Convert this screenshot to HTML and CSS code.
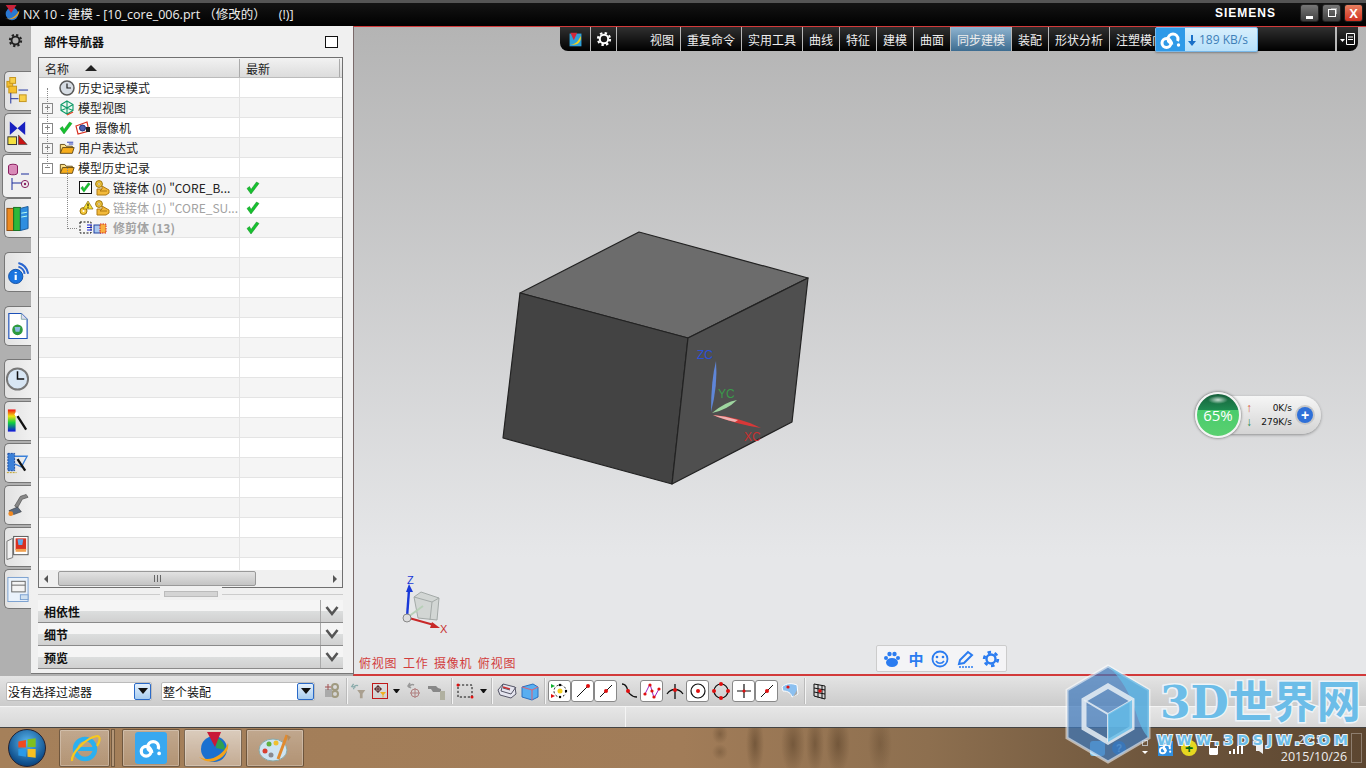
FILE: index.html
```html
<!DOCTYPE html>
<html lang="zh-CN">
<head>
<meta charset="utf-8">
<title>NX 10 - 建模</title>
<link rel="stylesheet" href="styles.css">
</head>
<body>
<svg class="defs" width="0" height="0">
  <symbol id="check" viewBox="0 0 14 14"><path d="M1 7.500 5 13 13 2.500 10.500 1 5 8.500 3.500 5.500Z" fill="#16c22e" stroke="#0d8a20" stroke-width=".5"/></symbol>
  <symbol id="bodyico" viewBox="0 0 16 16"><circle cx="5" cy="4" r="3.400" fill="#f5c83a" stroke="#9a7410"/><circle cx="5" cy="4" r="1.200" fill="#fff" stroke="#9a7410" stroke-width=".6"/><path d="M3 9h5V6l7 4v3l-3 2H3Z" fill="#f2b93a" stroke="#b07a12"/><path d="M8 9l-2 2h7" fill="none" stroke="#b07a12"/></symbol>
  <symbol id="folder" viewBox="0 0 18 16"><path d="M1.500 14V4h5l1.500 2h7v2" fill="#fbe08a" stroke="#5d4410"/><path d="M1.500 14 4 7.500h13L15 14Z" fill="#f7ad1c" stroke="#5d4410"/></symbol>
  <symbol id="gear" viewBox="0 0 16 16"><circle cx="8" cy="8" r="4.200" fill="none" stroke="currentColor" stroke-width="2"/><circle cx="8" cy="8" r="6" fill="none" stroke="currentColor" stroke-width="2.200" stroke-dasharray="2.400 2.300"/></symbol>
  <symbol id="chev" viewBox="0 0 14 12"><path d="M1.500 2 7 9 12.500 2" fill="none" stroke="#555" stroke-width="2.600"/></symbol>
  <symbol id="baidu" viewBox="0 0 24 24"><circle cx="7.500" cy="15" r="4.500" fill="none" stroke="#fff" stroke-width="3"/><path d="M9 11a5 5 0 0 1 10 0c0 1-.3 1.500-.6 2M9 11c0 3 2.500 4.500 5 4" fill="none" stroke="#fff" stroke-width="3"/><circle cx="19.500" cy="17" r="1.700" fill="#fff"/></symbol>
</svg>

<div class="app">
  <header class="titlebar">
    <svg class="app-logo" viewBox="0 0 20 20" width="18" height="18"><circle cx="10" cy="11" r="7" fill="#2a78d0"/><path d="M3 1h12l-6 9Z" fill="#c8233a"/><path d="M2 16C8 18 15 14 18 7c1 7-8 12-16 9Z" fill="#f2a21c"/></svg>
    <span class="title-text">NX 10 - 建模 - [10_core_006.prt （修改的）&nbsp;&nbsp;&nbsp;&nbsp;(!)]</span>
    <span class="siemens">SIEMENS</span>
    <div class="winbtns">
      <span class="winbtn"><i class="w-min"></i></span>
      <span class="winbtn"><i class="w-res"></i></span>
      <span class="winbtn w-close">X</span>
    </div>
  </header>

  <main class="main">
    <nav class="rail">
      <svg class="rail-gear"><use href="#gear"/></svg>
      <div class="tab t-a1">
        <svg viewBox="0 0 26 30" width="26" height="30"><rect x="2" y="5" width="6" height="6" fill="#f6c02f" stroke="#c4941c"/><rect x="5" y="1" width="6" height="6" fill="#f8d04a" stroke="#c4941c"/><rect x="4" y="10" width="8" height="7" fill="#f6c02f" stroke="#c4941c"/><path d="M6 17v11M6 23h8M14 14h10" stroke="#1c2f9c" fill="none"/><rect x="15" y="19" width="7" height="7" fill="#f8d04a" stroke="#c4941c"/></svg>
      </div>
      <div class="tab t-a2">
        <svg viewBox="0 0 26 30" width="26" height="30"><path d="M5 3 13 10 5 17ZM21 3 13 10 21 17Z" fill="#1820c0"/><rect x="3" y="19" width="9" height="8" fill="#f4e040" stroke="#333"/><path d="M14 27V17l9 10Z" fill="#c81414" stroke="#333" stroke-width=".6"/></svg>
      </div>
      <div class="tab t-active">
        <svg viewBox="0 0 26 30" width="26" height="30"><ellipse cx="9" cy="5" rx="4.500" ry="1.800" fill="#e090c0" stroke="#8a2060"/><path d="M4.500 5v7c0 2.400 9 2.400 9 0V5" fill="#d88ab8" stroke="#8a2060"/><path d="M8 17v12M8 22h10M17 13h8" stroke="#1c2f9c" fill="none"/><circle cx="21" cy="23" r="3.600" fill="none" stroke="#8a2060"/><circle cx="21" cy="23" r="1.200" fill="#8a2060"/></svg>
      </div>
      <div class="tab t-a4">
        <svg viewBox="0 0 26 30" width="26" height="30"><rect x="2" y="5" width="7" height="23" fill="#ee8a20" stroke="#8a4a10"/><rect x="9" y="4" width="7" height="24" fill="#2fb83a" stroke="#167020"/><path d="M16 5l8-2v23l-8 2Z" fill="#2e8ee0" stroke="#1a5a9a"/><path d="M17 10l6-1M17 14l6-1" stroke="#bfe" fill="none"/></svg>
      </div>
      <div class="tab t-b1">
        <svg viewBox="0 0 28 30" width="28" height="30"><path d="M15 5a15 15 0 0 1 11 12M15 9a10 10 0 0 1 7 8" fill="none" stroke="#2a66d0" stroke-width="2.200"/><circle cx="12" cy="20" r="8" fill="#1a74e0" stroke="#0c4aa0"/><path d="M12 15v1.500M12 18v6" stroke="#fff" stroke-width="2.400"/></svg>
      </div>
      <div class="tab t-c1">
        <svg viewBox="0 0 26 32" width="26" height="32"><path d="M4 3h13l6 6v20H4Z" fill="#fff" stroke="#1c50b8" stroke-width="1.200"/><path d="M17 3v6h6" fill="#dde" stroke="#8aa"/><circle cx="13" cy="20" r="5.500" fill="#2e9a3e"/><path d="M10 17h6l-1 5h-4Z" fill="#88b8e0"/></svg>
      </div>
      <div class="tab t-d2">
        <svg viewBox="0 0 26 30" width="26" height="30"><circle cx="13" cy="15" r="11" fill="#d8e6f4" stroke="#777" stroke-width="2"/><path d="M13 7v8h7" fill="none" stroke="#111" stroke-width="1.600"/></svg>
      </div>
      <div class="tab t-d2">
        <svg viewBox="0 0 26 30" width="26" height="30"><defs><linearGradient id="rb" x1="0" y1="0" x2="0" y2="1"><stop offset="0" stop-color="#f01010"/><stop offset=".3" stop-color="#f0e010"/><stop offset=".6" stop-color="#10d040"/><stop offset="1" stop-color="#1010e0"/></linearGradient></defs><rect x="3" y="3" width="8" height="23" fill="url(#rb)"/><path d="M13 10l9 14" stroke="#111" stroke-width="2.400"/><circle cx="12" cy="8" r="2" fill="#fff"/></svg>
      </div>
      <div class="tab t-d2">
        <svg viewBox="0 0 26 30" width="26" height="30"><rect x="3" y="5" width="7" height="18" fill="#3a80d8" stroke="#1a4aa0" stroke-dasharray="2 1"/><path d="M10 8h13l-6 11-7-3" fill="none" stroke="#3a80d8" stroke-width="1.400"/><path d="M13 11l8 12" stroke="#111" stroke-width="2.400"/><path d="M2 25h10" stroke="#c0a020" stroke-dasharray="2 1"/></svg>
      </div>
      <div class="tab t-d2">
        <svg viewBox="0 0 26 30" width="26" height="30"><path d="M16 6l6-2 2 3-6 2-5 9-3-2Z" fill="#888" stroke="#444" stroke-width=".6"/><path d="M4 21l9-4 4 5-8 3Z" fill="#5a6a80" stroke="#333" stroke-width=".6"/><circle cx="6" cy="24" r="2.500" fill="#f08820"/></svg>
      </div>
      <div class="tab t-d2">
        <svg viewBox="0 0 26 30" width="26" height="30"><path d="M2 9l6-3v20l-6 2Z" fill="#f0f0f0" stroke="#777"/><rect x="9" y="4" width="15" height="19" fill="#fff" stroke="#555"/><rect x="11" y="6" width="11" height="12" fill="#d83020"/><path d="M13 7h6l-1 6h-4Z" fill="#60a8e8"/><rect x="11" y="17" width="11" height="3" fill="#f0a050"/></svg>
      </div>
      <div class="tab t-d2">
        <svg viewBox="0 0 26 30" width="26" height="30"><rect x="3" y="3" width="21" height="25" fill="#eaf2fb" stroke="#7aa0d0"/><rect x="7" y="7" width="14" height="11" fill="#f4f4f4" stroke="#666"/><path d="M7 11h14" stroke="#666"/><rect x="16" y="21" width="8" height="5" fill="#cfe0f0" stroke="#7aa0d0"/></svg>
      </div>
    </nav>

    <section class="nav-panel">
      <div class="nav-head"><strong class="nav-title">部件导航器</strong><span class="maximize"></span></div>
      <div class="tree-box">
        <div class="tree-header">
          <div class="col-name">名称<i class="sort-up"></i></div>
          <div class="col-new">最新</div>
        </div>
        <div class="tree-body">
          <div class="tree-lines l-a"></div><div class="tree-lines l-b"></div>
          <div class="row">
            <div class="col-name"><span class="tg"></span><svg class="i16" viewBox="0 0 16 16"><circle cx="8" cy="8" r="7" fill="#d7dde4" stroke="#5a5a5a" stroke-width="1.500"/><path d="M8 3.500V8h4" fill="none" stroke="#222" stroke-width="1.200"/></svg><span class="lbl">历史记录模式</span></div><div class="col-new"></div>
          </div>
          <div class="row alt">
            <div class="col-name"><span class="tg plus"></span><svg class="i16" viewBox="0 0 16 16"><path d="M8 1l6 3.500v6L8 14l-6-3.500v-6Z M2 4.500 8 8l6-3.500M8 8v6M2 10.500 8 8l6 2.500M8 1v7" fill="#eafaf0" stroke="#0f9a68" stroke-width="1.100"/><path d="M8 15l6-3" stroke="#e04020" stroke-width="1.300"/></svg><span class="lbl">模型视图</span></div><div class="col-new"></div>
          </div>
          <div class="row">
            <div class="col-name"><span class="tg plus"></span><svg class="i14"><use href="#check"/></svg><svg class="i16 cam" viewBox="0 0 16 16"><path d="M1 6l11-4 2 9-11 3Z" fill="#fff" stroke="#d83020" stroke-width="1.200"/><circle cx="7.500" cy="8" r="3" fill="#5060b0" stroke="#223080"/><rect x="11" y="7" width="4" height="5" fill="#222"/></svg><span class="lbl">摄像机</span></div><div class="col-new"></div>
          </div>
          <div class="row alt">
            <div class="col-name"><span class="tg plus"></span><svg class="i16" viewBox="0 0 18 16"><use href="#folder"/><path d="M9 1.500h7M11 3.500h5" stroke="#1c2fb0"/></svg><span class="lbl">用户表达式</span></div><div class="col-new"></div>
          </div>
          <div class="row">
            <div class="col-name"><span class="tg minus"></span><svg class="i16"><use href="#folder"/></svg><span class="lbl">模型历史记录</span></div><div class="col-new"></div>
          </div>
          <div class="row alt">
            <div class="col-name lv2"><span class="cb"><svg class="i11"><use href="#check"/></svg></span><svg class="i16"><use href="#bodyico"/></svg><span class="lbl">链接体 (0) "CORE_B...</span></div><div class="col-new"><svg class="i14"><use href="#check"/></svg></div>
          </div>
          <div class="row grey">
            <div class="col-name lv2"><svg class="i16 warn" viewBox="0 0 16 16"><circle cx="4.500" cy="11" r="3.500" fill="#f5c83a" stroke="#9a7410"/><circle cx="4.500" cy="11" r="1" fill="#fff"/><path d="M9 1l5 8H4Z" fill="#f8e030" stroke="#8a6a10" stroke-width=".7"/><path d="M9 3.500v3M9 7.200v1" stroke="#000"/></svg><svg class="i16"><use href="#bodyico"/></svg><span class="lbl">链接体 (1) "CORE_SU...</span></div><div class="col-new"><svg class="i14"><use href="#check"/></svg></div>
          </div>
          <div class="row alt grey">
            <div class="col-name lv2"><svg class="trim" viewBox="0 0 28 14" width="28" height="14"><rect x="1" y="1" width="11" height="11" fill="none" stroke="#111" stroke-dasharray="2 1.500"/><path d="M8 4h5M8 6.500h5M8 9h5" stroke="#1820d0"/><rect x="15" y="4" width="7" height="8" fill="#a8c8f0" stroke="#2040a0"/><rect x="21" y="3" width="6" height="9" fill="#f8b040" stroke="#d02020" stroke-dasharray="1.500 1"/></svg><span class="lbl lbl-b">修剪体 (13)</span></div><div class="col-new"><svg class="i14"><use href="#check"/></svg></div>
          </div>
          <div class="row"></div><div class="row alt"></div><div class="row"></div><div class="row alt"></div><div class="row"></div><div class="row alt"></div><div class="row"></div><div class="row alt"></div><div class="row"></div><div class="row alt"></div><div class="row"></div><div class="row alt"></div><div class="row"></div><div class="row alt"></div><div class="row"></div><div class="row alt"></div><div class="row"></div>
        </div>
        <div class="hscroll">
          <i class="arr-l"></i>
          <div class="thumb"><b></b></div>
          <i class="arr-r"></i>
        </div>
      </div>
      <div class="splitter"><span></span></div>
      <div class="acc"><strong>相依性</strong><span class="acc-btn"><svg><use href="#chev"/></svg></span></div>
      <div class="acc"><strong>细节</strong><span class="acc-btn"><svg><use href="#chev"/></svg></span></div>
      <div class="acc"><strong>预览</strong><span class="acc-btn"><svg><use href="#chev"/></svg></span></div>
    </section>

    <section class="viewport">
      <svg class="scene" viewBox="353 26 1013 650" width="1013" height="650">
        <g stroke="#222" stroke-width="1.200" stroke-linejoin="round">
          <path d="M520 293 639 232 808 278 688 338Z" fill="#6c6c6c"/>
          <path d="M520 293 688 338 672 484 503 438Z" fill="#434343"/>
          <path d="M688 338 808 278 792 422 672 484Z" fill="#4f4f4f"/>
        </g>
        <path d="M711 412Q711 380 716 361Q718 385 711 412Z" fill="#5f86d8"/>
        <path d="M712 413Q725 402 737 400Q727 410 712 413Z" fill="#9fd6a0"/>
        <path d="M713 415Q740 417 761 428Q735 424 713 415Z" fill="#d83838"/>
        <path d="M713 415Q725 416 738 420L735 422Q722 419 713 415Z" fill="#f0b0b0"/>
        <text x="697" y="359" class="axis" fill="#2a50d8">ZC</text>
        <text x="718" y="398" class="axis" fill="#3a9a4a">YC</text>
        <text x="744" y="441" class="axis" fill="#c83030">XC</text>
        <g fill="#c9cecb" fill-opacity=".7" stroke="#a4aaa8">
          <path d="M414 597 421 592 439 598 437 620 418 618Z"/>
          <path d="M414 597 432 602 439 598M432 602 430 620" fill="none"/>
        </g>
        <path d="M408 617 423 606" stroke="#b8d0b8" stroke-width="2"/>
        <path d="M407 617 409 590" stroke="#1838d8" stroke-width="2.400"/>
        <path d="M406 592 409 584 413 592Z" fill="#1838d8"/>
        <path d="M409 618 434 625" stroke="#c82828" stroke-width="2.200"/>
        <path d="M432 622 440 628 430 628Z" fill="#c82828"/>
        <circle cx="407" cy="618" r="4" fill="#ddd" stroke="#888"/>
        <text x="407" y="584" class="mini" fill="#1838d8">Z</text>
        <text x="440" y="633" class="mini" fill="#c83030">X</text>
      </svg>
      <div class="view-label">俯视图 工作 摄像机 俯视图</div>

      <div class="ribbon">
        <span class="rb-cell rb-logo"><svg viewBox="0 0 20 20" width="17" height="17"><rect x="3" y="3" width="14" height="15" fill="#2fa0d8"/><path d="M4 2h8l-4 9Z" fill="#d0283a"/><path d="M3 15c6 2 10-2 13-9 2 7-5 13-13 9Z" fill="#f3d21c"/></svg></span>
        <span class="rb-cell rb-gear"><svg width="16" height="16"><use href="#gear"/></svg></span>
        <span class="rb-cell rb-first">视图</span>
        <span class="rb-cell rb-4">重复命令</span>
        <span class="rb-cell rb-4">实用工具</span>
        <span class="rb-cell rb-2">曲线</span>
        <span class="rb-cell rb-2">特征</span>
        <span class="rb-cell rb-2">建模</span>
        <span class="rb-cell rb-2">曲面</span>
        <span class="rb-cell rb-4 rb-on">同步建模</span>
        <span class="rb-cell rb-2">装配</span>
        <span class="rb-cell rb-4">形状分析</span>
        <span class="rb-cell rb-fill">注塑模向导</span>
        <span class="rb-cell rb-menu"><svg width="16" height="14" viewBox="0 0 16 14"><path d="M0 7h5L2.500 10Z" fill="#fff"/><path d="M6.500 1.500h8v11h-8ZM8 5h5M8 7.500h5" fill="none" stroke="#fff"/></svg></span>
      </div>
      <div class="speed">
        <span class="speed-ico"><svg width="24" height="24"><use href="#baidu"/></svg></span>
        <span class="speed-txt"><svg width="8" height="12" viewBox="0 0 8 12"><path d="M3 1h2v6h3l-4 5-4-5h3Z" fill="#1a70c8"/></svg>189 KB/s</span>
      </div>

      <div class="net">
        <div class="net-ball"><span>65%</span></div>
        <div class="net-rates">
          <div class="rate"><i class="up">↑</i><span>0K/s</span></div>
          <div class="rate"><i class="down">↓</i><span>279K/s</span></div>
        </div>
        <span class="net-plus">+</span>
      </div>

      <div class="ime">
        <svg width="18" height="18" viewBox="0 0 18 18"><ellipse cx="9" cy="12.500" rx="6" ry="4.500" fill="#2b7cf0"/><circle cx="3" cy="8" r="2" fill="#2b7cf0"/><circle cx="15" cy="8" r="2" fill="#2b7cf0"/><circle cx="6.500" cy="4" r="2.200" fill="#2b7cf0"/><circle cx="11.500" cy="4" r="2.200" fill="#2b7cf0"/></svg>
        <span class="ime-zh">中</span>
        <svg width="18" height="18" viewBox="0 0 18 18"><circle cx="9" cy="9" r="7.500" fill="none" stroke="#2b7cf0" stroke-width="1.800"/><circle cx="6" cy="7" r="1.300" fill="#2b7cf0"/><circle cx="12" cy="7" r="1.300" fill="#2b7cf0"/><path d="M5 11c2 3 6 3 8 0" fill="none" stroke="#2b7cf0" stroke-width="1.600"/></svg>
        <svg width="18" height="18" viewBox="0 0 18 18"><path d="M2 14 3 10 11 2l4 3-8 8Z" fill="none" stroke="#2b7cf0" stroke-width="2"/><path d="M2 17h14" stroke="#2b7cf0" stroke-width="1.500" stroke-dasharray="2 1"/></svg>
        <svg width="18" height="18" viewBox="0 0 18 18"><circle cx="9" cy="9" r="4.500" fill="none" stroke="#2b7cf0" stroke-width="2.400"/><circle cx="9" cy="9" r="6.800" fill="none" stroke="#2b7cf0" stroke-width="2.800" stroke-dasharray="3.500 3.600"/></svg>
      </div>
    </section>
  </main>

  <div class="toolbar">
    <div class="combo c-filter"><span>没有选择过滤器</span><i></i></div>
    <div class="combo c-assy"><span>整个装配</span><i></i></div>
    <div class="tools">
      <span class="t"><svg viewBox="0 0 20 20" width="20" height="20"><circle cx="13" cy="6" r="3" fill="none" stroke="#a09a80" stroke-width="2"/><circle cx="13" cy="13" r="3" fill="none" stroke="#a09a80" stroke-width="2"/><rect x="3" y="8" width="7" height="8" fill="#aaa"/><path d="M6 3v6M3 6h6" stroke="#a05050"/></svg></span>
      <i class="sep"></i>
      <span class="t t-n"><svg viewBox="0 0 20 20" width="20" height="20"><path d="M4 8c0-3 2-5 5-4M4 2 2 5l4 1" fill="none" stroke="#8aa" stroke-width="1.500"/><path d="M8 9h9l-3 4v5h-3v-5Z" fill="#aaa090"/></svg></span>
      <span class="t t-red"><svg viewBox="0 0 14 14" width="14" height="14"><circle cx="5" cy="5" r="2.500" fill="none" stroke="#502020"/><path d="M5 1v8M1 5h8" stroke="#502020"/><path d="M7 8h6l-2.500 3v2.500H9.500V11Z" fill="#f0b020"/></svg></span>
      <i class="caret"></i>
      <span class="t"><svg viewBox="0 0 20 20" width="20" height="20"><path d="M5 7c0-3 3-4 5-3M6 2 4 5l3 2" fill="none" stroke="#999" stroke-width="1.500"/><circle cx="11" cy="12" r="4" fill="none" stroke="#b08080"/><path d="M11 7v10M6 12h10" stroke="#b08080"/></svg></span>
      <span class="t"><svg viewBox="0 0 20 20" width="20" height="20"><path d="M1 5h8l2 2 3 1v3H6L4 8H1Z" fill="#888"/><rect x="13" y="10" width="5" height="9" fill="#b0b0a0"/></svg></span>
      <i class="sep"></i>
      <span class="t t-w"><svg viewBox="0 0 20 20" width="20" height="20"><rect x="3" y="4" width="14" height="12" fill="none" stroke="#111" stroke-dasharray="2.200 1.800"/><circle cx="3" cy="4" r="1.500" fill="#e01010"/><circle cx="17" cy="16" r="1.500" fill="#e01010"/></svg></span>
      <i class="caret"></i>
      <i class="sep sep-s"></i>
      <span class="t"><svg viewBox="0 0 20 20" width="20" height="20"><path d="M1 9 6 3l12 3 1 7-5 4-11-3Z" fill="#e4e4ee" stroke="#556"/><path d="M6 3 4 10l10 3 5-7M6 7l7 2" fill="none" stroke="#556"/><path d="M6 6l7 2" stroke="#d03030" stroke-width="1.500"/></svg></span>
      <span class="t"><svg viewBox="0 0 20 20" width="20" height="20"><path d="M2 6l11-3 5 3v10l-6 3-10-3Z" fill="#58aef0" stroke="#2a70c0"/><path d="M2 6l10 3 6-3M12 9v10" fill="none" stroke="#e06070"/></svg></span>
      <i class="sep"></i>
      <span class="t boxed"><svg viewBox="0 0 20 20" width="20" height="20"><circle cx="10" cy="10" r="6" fill="none" stroke="#111" stroke-dasharray="2 2"/><circle cx="10" cy="10" r="2.500" fill="#f4d020"/><path d="M1 3l4 2-4 2Z" fill="#10b030"/><path d="M1 13l4 2-4 2Z" fill="#e01010"/><circle cx="10" cy="4" r="1.200"/><circle cx="16" cy="10" r="1.200"/><circle cx="10" cy="16" r="1.200"/></svg></span>
      <span class="t boxed"><svg viewBox="0 0 20 20" width="20" height="20"><path d="M4 16 15 5" stroke="#111"/><circle cx="15" cy="5" r="2" fill="#e01010"/></svg></span>
      <span class="t boxed"><svg viewBox="0 0 20 20" width="20" height="20"><path d="M4 16 16 4" stroke="#111"/><circle cx="10" cy="10" r="2" fill="#e01010"/></svg></span>
      <span class="t"><svg viewBox="0 0 20 20" width="20" height="20"><path d="M3 3c6 0 5 7 7 9s3 4 8 4" fill="none" stroke="#111" stroke-width="1.300"/><circle cx="9" cy="10" r="2" fill="#e01010"/></svg></span>
      <span class="t boxed"><svg viewBox="0 0 20 20" width="20" height="20"><path d="M3 13 8 3l4 14 5-9" fill="none" stroke="#a020c0"/><circle cx="3" cy="13" r="1.600" fill="#e01010"/><circle cx="8" cy="4" r="1.600" fill="#e01010"/><circle cx="12" cy="16" r="1.600" fill="#e01010"/><circle cx="17" cy="8" r="1.600" fill="#e01010"/><circle cx="10" cy="10" r="1.600" fill="#e01010"/></svg></span>
      <span class="t"><svg viewBox="0 0 20 20" width="20" height="20"><path d="M2 13c4-6 12-6 16 0M10 3v15" fill="none" stroke="#111" stroke-width="1.300"/><circle cx="10" cy="9" r="2" fill="#e01010"/></svg></span>
      <span class="t boxed"><svg viewBox="0 0 20 20" width="20" height="20"><circle cx="10" cy="10" r="7" fill="none" stroke="#111" stroke-width="1.200"/><circle cx="10" cy="10" r="2" fill="#e01010"/></svg></span>
      <span class="t"><svg viewBox="0 0 20 20" width="20" height="20"><circle cx="10" cy="10" r="7" fill="none" stroke="#111" stroke-width="1.200"/><circle cx="10" cy="3" r="2" fill="#e01010"/><circle cx="10" cy="17" r="2" fill="#e01010"/><circle cx="3" cy="10" r="2" fill="#e01010"/><circle cx="17" cy="10" r="2" fill="#e01010"/></svg></span>
      <span class="t boxed"><svg viewBox="0 0 20 20" width="20" height="20"><path d="M10 3v14M3 10h14" stroke="#111" stroke-width="1.200"/><circle cx="10" cy="10" r="1.600" fill="#e01010"/></svg></span>
      <span class="t boxed"><svg viewBox="0 0 20 20" width="20" height="20"><path d="M4 16 16 4" stroke="#111"/><circle cx="10" cy="10" r="2" fill="#e01010"/></svg></span>
      <span class="t"><svg viewBox="0 0 20 20" width="20" height="20"><path d="M2 6c4-4 10-4 15-2l1 9-6 3c-1-4-4-6-9-6Z" fill="#8cc0f0" stroke="#fff"/><path d="M13 16l4-3v-4Z" fill="#aaa"/><circle cx="8" cy="6" r="1.600" fill="#e01010"/></svg></span>
      <i class="sep"></i>
      <span class="t"><svg viewBox="0 0 20 20" width="20" height="20"><path d="M4 3l11 2v13l-11-3Z" fill="none" stroke="#111"/><path d="M8 3.500v13M12 4.500v13M4 7l11 2M4 11l11 2" stroke="#111"/><circle cx="10" cy="10" r="1.800" fill="#e01010"/></svg></span>
    </div>
  </div>

  <div class="status"><div class="st-a"></div><div class="st-b"></div></div>

  <footer class="taskbar">
    <div class="orb"><svg viewBox="0 0 24 24" width="26" height="26"><path d="M4 6l7-1.500v7H4Z" fill="#f04a20"/><path d="M12.500 4 20 3v8h-7.500Z" fill="#7fc020"/><path d="M4 13h7v7l-7-1Z" fill="#2a9ae8"/><path d="M12.500 13H20v8l-7.500-1Z" fill="#f8c020"/></svg></div>
    <div class="tb-btn tb-ie"><svg viewBox="0 0 32 32" width="32" height="32"><circle cx="16" cy="17" r="10" fill="none" stroke="#2ab0f0" stroke-width="4.500"/><path d="M7 17h19" stroke="#2ab0f0" stroke-width="4"/><path d="M3 29C2 22 16 6 28 4c4 0 3 6 0 10" fill="none" stroke="#f6c81e" stroke-width="2.200"/></svg></div>
    <span class="tb-ghost"></span>
    <div class="tb-btn tb-bd"><span class="bd-square"><svg width="26" height="26"><use href="#baidu"/></svg></span></div>
    <div class="tb-btn tb-nx tb-active"><svg viewBox="0 0 40 34" width="40" height="34"><circle cx="21" cy="18" r="13" fill="#1a70d0"/><path d="M24 7a12 12 0 0 1 8 12l-9-2Z" fill="#30a050"/><path d="M14 1h14L22 16Z" fill="#c81838"/><path d="M6 26c10 5 24 0 29-14 3 12-16 26-29 14Z" fill="#f2a21c"/></svg></div>
    <div class="tb-btn tb-paint"><svg viewBox="0 0 36 32" width="36" height="32"><ellipse cx="16" cy="18" rx="14" ry="11" fill="#cfe4f2" stroke="#8aa"/><circle cx="8" cy="19" r="2.500" fill="#d84030"/><circle cx="12" cy="12" r="2.500" fill="#60b040"/><circle cx="19" cy="11" r="2.500" fill="#f0c030"/><circle cx="14" cy="23" r="2.500" fill="#8a8a90"/><path d="M30 3 21 27" stroke="#e08a30" stroke-width="3"/><path d="M30 3l4 2-3 4Z" fill="#b08a60"/></svg></div>
    <div class="tray">
      <span class="tray-ico t-paw"></span>
      <span class="tray-ico t-q">?</span>
      <span class="tray-ico t-win"></span>
      <i class="t-up"></i>
      <span class="tray-ico t-bd"><svg width="15" height="15"><use href="#baidu"/></svg></span>
      <span class="tray-ico t-plus">+</span>
      <span class="tray-ico t-bat"></span>
      <svg class="t-net" width="16" height="12" viewBox="0 0 16 12"><path d="M1 9h2v3H1ZM5 7h2v5H5ZM9 4h2v8H9ZM13 1h2v11h-2Z" fill="#fff"/></svg>
      <svg class="t-vol" width="12" height="14" viewBox="0 0 12 14"><path d="M1 4h3l4-3v12l-4-3H1Z" fill="#eee"/></svg>
      <div class="clock"><span>22:53</span><span>2015/10/26</span></div>
      <span class="show-desk"></span>
    </div>
  </footer>

  <div class="watermark">
    <svg class="wm-hex" viewBox="0 0 88 100" width="88" height="100">
      <path d="M44 2 85 26V74L44 98 3 74V26Z" fill="#3f79bb" fill-opacity=".72" stroke="#fff" stroke-opacity=".55" stroke-width="3"/>
      <path d="M44 2 85 26V74C70 60 74 30 44 2Z" fill="#63bde8" fill-opacity=".7"/>
      <path d="M44 22 68 36V64L44 78 20 64V36Z" fill="none" stroke="#e8eef5" stroke-opacity=".85" stroke-width="5"/>
      <path d="M20 36 44 50 68 36M44 50V78" fill="none" stroke="#e8eef5" stroke-opacity=".85" stroke-width="2"/>
      <path d="M44 50 68 36V64L44 78Z" fill="#63bde8" fill-opacity=".8"/>
    </svg>
    <div class="wm-title"><span class="wm-3d">3D</span>世界网</div>
    <div class="wm-url">WWW.3DSJW.COM</div>
  </div>
</div>
</body>
</html>
```

FILE: styles.css
```css
* { box-sizing: border-box; }
html, body { margin: 0; padding: 0; height: 100%; overflow: hidden; }
body { font-family: "Noto Sans CJK SC", "Liberation Sans", sans-serif; font-size: 12px; color: #222; }
.defs { position: absolute; }
.app { position: relative; width: 1366px; height: 768px; display: flex; flex-direction: column; overflow: hidden; }

/* title bar */
.titlebar { height: 26px; flex: none; display: flex; align-items: center; padding: 0 3px 3px 3px; color: #fff;
  border-top: 3px solid #555; background: linear-gradient(#141414, #000); position: relative; }
.app-logo { flex: none; margin-right: 2px; }
.title-text { font-family: "Open Sans", "Noto Sans CJK SC", sans-serif; font-size: 12.5px; color: #eee; white-space: pre; }
.siemens { margin-left: auto; margin-right: 24px; font-family: "Liberation Sans", sans-serif; font-weight: 700; font-size: 12px; letter-spacing: 1px; }
.winbtns { display: flex; gap: 3px; align-self: flex-start; margin-top: 1px; }
.winbtn { width: 19px; height: 18px; border-radius: 3px; display: flex; align-items: center; justify-content: center;
  background: linear-gradient(#777, #3e3e3e); border: 1px solid #222; position: relative; }
.w-min { width: 7px; height: 3px; background: #fff; margin-top: 8px; }
.w-res { width: 8px; height: 8px; border: 1px solid #fff; box-shadow: 2px -2px 0 -1px #aaa; }
.w-close { background: linear-gradient(#e88060, #d03020); font: 700 13px "Liberation Sans", sans-serif; color: #fff; }

/* main */
.main { flex: none; height: 650px; display: flex; background: #b0b0b0; }
.rail { width: 31px; flex: none; background: #b0b0b0; display: flex; flex-direction: column; align-items: flex-end; position: relative; }
.rail-gear { width: 15px; height: 15px; color: #222; align-self: flex-start; margin: 7px 0 23px 8px; flex: none; }
.tab { width: 27px; height: 40px; flex: none; background: linear-gradient(90deg, #e2e2e2, #f0f0f0); border: 1px solid #777; border-right: 0;
  border-radius: 5px 0 0 5px; display: flex; align-items: center; justify-content: center; padding-right: 1px; overflow: hidden; }
.t-a1 { margin-bottom: 2px; }
.t-a2 { margin-bottom: 1px; }
.t-active { width: 29px; height: 44px; background: #f0f0f0; z-index: 1; }
.t-a4 { margin-bottom: 14px; }
.t-b1 { margin-bottom: 14px; }
.t-c1 { margin-bottom: 13px; }
.t-d2 { margin-bottom: 2px; }

/* navigator */
.nav-panel { width: 322px; flex: none; background: #f0f0f0; padding: 0 10px 0 7px; display: flex; flex-direction: column; border-bottom: 1px solid #777; height: 648px; }
.nav-head { height: 31px; flex: none; display: flex; align-items: center; justify-content: space-between; padding: 0 5px 0 6px; }
.nav-title { font-size: 12px; font-weight: 700; color: #111; }
.maximize { width: 13px; height: 12px; border: 1.500px solid #111; background: #fff; }
.tree-box { height: 531px; flex: none; border: 1px solid #707070; background: #fff; display: flex; flex-direction: column; }
.tree-header { height: 20px; flex: none; display: flex; background: linear-gradient(#f2f2f2, #dcdcdc); border-bottom: 1px solid #bbb; padding-top: 1px; }
.col-name { width: 201px; flex: none; height: 100%; display: flex; align-items: center; border-right: 1px solid #e2e2e2; overflow: hidden; white-space: nowrap; }
.col-new { flex: 1; height: 100%; display: flex; align-items: center; padding-left: 6px; }
.tree-header .col-name { padding-left: 6px; border-right-color: #aaa; }
.tree-header .col-new { margin-right: 2px; border-right: 1px solid #aaa; }
.sort-up { width: 0; height: 0; margin-left: 16px; border: 6px solid transparent; border-top: 0; border-bottom-color: #222; }
.tree-body { flex: 1; overflow: hidden; position: relative; min-height: 0; }
.row { height: 20px; display: flex; border-bottom: 1px solid #e4e4e4; background: #fff; }
.row.alt { background: #f5f5f5; }
.row.grey .lbl { color: #a2a2a2; }
.row:not(:has(.col-name)) { background-image: linear-gradient(#e4e4e4, #e4e4e4); background-size: 1px 100%; background-position: 200px 0; background-repeat: no-repeat; }
.tg { width: 16px; margin-right: 4px; flex: none; display: flex; justify-content: center; position: relative; z-index: 1; height: 9px; }
.tg.plus, .tg.minus { background: linear-gradient(#888, #888) center/5px 1px no-repeat; }
.tg.plus::before, .tg.minus::before { content: ""; width: 9px; height: 9px; border: 1px solid #888; }
.tg.plus::after { content: ""; position: absolute; width: 1px; height: 5px; top: 2px; left: 7.500px; background: #888; }
.i16 { width: 16px; height: 16px; flex: none; }
.i14 { width: 14px; height: 14px; flex: none; }
.i11 { width: 11px; height: 11px; display: block; }
.cam { margin: 0 1px 0 2px; }
.lbl { margin-left: 3px; color: #222; }
.lbl-b { font-weight: 700; margin-left: 6px; }
.lv2 { padding-left: 40px; }
.warn { margin-right: -1px; }
.cb { width: 13px; height: 13px; border: 1px solid #111; background: #fff; flex: none; margin-right: 2px; display: flex; align-items: center; justify-content: center; }
.trim { width: 28px; height: 14px; flex: none; }
.tree-lines { position: absolute; border-left: 1px dotted #888; border-bottom: 1px dotted #888; }
.l-a { left: 8px; top: 10px; width: 10px; height: 80px; border-bottom: 0; }
.l-b { left: 28px; top: 90px; width: 10px; height: 61px; }
.hscroll { height: 17px; flex: none; background: #f0f0f0; display: flex; align-items: center; padding: 0 5px; position: relative; }
.arr-l, .arr-r { width: 0; height: 0; border: 4px solid transparent; }
.arr-l { border-right-color: #555; border-left: 0; }
.arr-r { border-left-color: #555; border-right: 0; margin-left: auto; }
.thumb { width: 198px; height: 15px; margin-left: 10px; border: 1px solid #999; border-radius: 2px; background: linear-gradient(#e2e2e2, #c4c4c4); display: flex; align-items: center; justify-content: center; }
.thumb b { width: 7px; height: 7px; border-left: 1px solid #666; border-right: 1px solid #666; background: linear-gradient(90deg, transparent 2px, #666 2px, #666 3px, transparent 3px); }
.splitter { height: 12px; flex: none; display: flex; align-items: center; background: linear-gradient(#ccc, #ccc) center/100% 1px no-repeat; justify-content: center; }
.splitter span { width: 54px; height: 6px; background: #d4d4d4; border: 1px solid #bbb; box-shadow: 0 0 0 4px #f0f0f0; }
.acc { height: 23px; flex: none; display: flex; align-items: center; justify-content: space-between; background: linear-gradient(#f5f5f5 0 50%, #dcdede 50%, #d0d0d0); border-bottom: 1px solid #8a8a8a; padding-left: 6px; }
.acc strong { font-size: 12px; color: #111; }
.acc-btn { width: 23px; height: 100%; border-left: 1px solid #aaa; display: flex; align-items: center; justify-content: center; }
.acc-btn svg { width: 14px; height: 12px; }

/* viewport */
.viewport { flex: 1; position: relative; background: linear-gradient(#b4b4b4, #e6e7e9 82%); border-left: 1px solid #7a6a6a; border-top: 1px solid #d23a3a; border-bottom: 2px solid #d23a3a; }
.scene { position: absolute; left: -1px; top: -1px; }
.axis { font: 12px "Liberation Sans", sans-serif; }
.mini { font: 11px "Liberation Sans", sans-serif; }
.view-label { position: absolute; left: 5px; bottom: 3px; color: #d23c3c; font-size: 12px; letter-spacing: .8px; word-spacing: 2px; }
.ribbon { position: absolute; left: 206px; top: 0; width: 798px; height: 24px; display: flex; background: linear-gradient(#303030, #000); border-radius: 0 0 8px 8px; color: #eee; }
.rb-cell { height: 100%; display: flex; align-items: center; justify-content: center; border-right: 1px solid #b8b8b8; font-size: 12px; flex: none; white-space: nowrap; }
.rb-logo { width: 31px; }
.rb-gear { width: 26px; color: #fff; }
.rb-first { width: 64px; justify-content: flex-end; padding-right: 6px; }
.rb-4 { width: 61px; }
.rb-2 { width: 37px; }
.rb-on { background: linear-gradient(#8fb4d0, #3d6c90); }
.rb-fill { flex: 1 0 0; justify-content: flex-start; padding-left: 6px; overflow: hidden; }
.rb-menu { width: 22px; border-right: 0; border-left: 1px solid #b8b8b8; }
.speed { position: absolute; left: 801px; top: 0; width: 103px; height: 25px; display: flex; border: 1px solid #7ab8e8; border-radius: 2px; background: linear-gradient(#d8effc, #b7e0fa); box-shadow: 0 1px 2px rgba(0,0,0,.3); }
.speed-ico { width: 29px; background: #2f9ae8; display: flex; align-items: center; justify-content: center; }
.speed-txt { font: 12px "Open Sans", sans-serif; color: #3d7fb8; display: flex; align-items: center; gap: 3px; padding-left: 3px; }
.net { position: absolute; left: 841px; top: 365px; width: 126px; height: 46px; display: flex; align-items: center; }
.net-ball { width: 46px; height: 46px; border-radius: 50%; border: 2px solid #f4f4f4; box-shadow: 0 0 3px rgba(0,0,0,.6); background: radial-gradient(ellipse 10px 4px at 50% 14%, rgba(255,255,255,.75), transparent), linear-gradient(#17603c, #1e8a50 38%, #48cc6c 38%, #5ad070); display: flex; align-items: center; justify-content: center; color: #fff; font: 15px "Open Sans", sans-serif; flex: none; position: relative; z-index: 1; }
.net-rates { width: 90px; height: 38px; margin-left: -10px; padding: 0 29px 0 15px; background: linear-gradient(#f6f6f6, #d4d4d4); border-radius: 0 19px 19px 0; box-shadow: 0 1px 3px rgba(0,0,0,.35); display: flex; flex-direction: column; justify-content: center; flex: 1 0 auto; font: 9px/14px "DejaVu Sans", sans-serif; color: #111; }
.rate { display: flex; justify-content: space-between; }
.rate i { font: 700 12px/14px "Liberation Sans", sans-serif; }
.up { color: #d85a40; }
.down { color: #2a8a50; }
.net-plus { position: absolute; right: 8px; top: 15px; width: 16px; height: 16px; border-radius: 50%; background: #2f70d8; color: #fff; font: 700 14px/16px "Liberation Sans", sans-serif; text-align: center; box-shadow: 0 0 0 2px #c8c8c8; }
.ime { position: absolute; left: 522px; bottom: 2px; width: 131px; height: 27px; background: #f4f4f6; border: 1px solid #ccc; border-radius: 2px; display: flex; align-items: center; justify-content: space-around; padding: 0 2px; }
.ime-zh { color: #2b7cf0; font-size: 15px; font-weight: 700; line-height: 18px; }

/* toolbar */
.toolbar { height: 30px; flex: none; display: flex; align-items: center; padding-left: 6px; background: linear-gradient(#e4e4e4, #cbcbcb); }
.combo { height: 19px; border: 1px solid #bbb; border-radius: 2px; background: #fff; display: flex; align-items: center; justify-content: space-between; color: #111; flex: none; }
.combo span { padding-left: 1px; font-size: 12px; }
.combo i { width: 17px; height: 100%; border: 1px solid #2a6ac8; border-radius: 2px; background: linear-gradient(#e4f0fc, #a8cdf0); display: flex; align-items: center; justify-content: center; }
.combo i::after { content: ""; border: 5px solid transparent; border-top: 6px solid #111; border-bottom: 0; }
.c-filter { width: 146px; margin-right: 9px; }
.c-assy { width: 154px; margin-right: 5px; }
.tools { display: flex; align-items: center; height: 100%; }
.t { width: 23px; height: 22px; flex: none; display: flex; align-items: center; justify-content: center; }
.t-n { width: 18px; }
.t-w { width: 20px; }
.t-red { border: 1px solid #c01818; width: 16px; height: 16px; margin: 0 4px; }
.boxed { background: #fff; border: 1px solid #888; border-radius: 3px; }
.sep { width: 2px; height: 26px; background: #f4f4f4; border-left: 1px solid #bbb; margin: 0 2px 0 3px; flex: none; }
.sep-s { margin: 0 2px 0 0; }
.caret { width: 7px; border: 3.500px solid transparent; border-top: 4px solid #111; border-bottom: 0; margin: 0 4px 0 5px; flex: none; }
.t-red + .caret { margin: 0 2px 0 1px; }

.status { height: 22px; flex: none; display: flex; background: linear-gradient(#e6e6e6, #d8d8d8); border-top: 1px solid #f4f4f4; border-bottom: 1px solid #444; }
.st-a { width: 626px; border-right: 1px solid #f4f4f4; }
.st-b { flex: 1; }

/* taskbar */
.taskbar { flex: 1; display: flex; align-items: center; padding-left: 8px; color: #fff; background:
  radial-gradient(ellipse 8px 10px at 720px 6px, rgba(60,40,20,.3), transparent),
  radial-gradient(ellipse 8px 8px at 720px 24px, rgba(60,40,20,.25), transparent),
  radial-gradient(ellipse 9px 30px at 755px 16px, rgba(60,40,20,.4), transparent),
  radial-gradient(ellipse 12px 30px at 793px 16px, rgba(60,40,20,.38), transparent),
  radial-gradient(ellipse 9px 30px at 815px 16px, rgba(60,40,20,.35), transparent),
  radial-gradient(ellipse 12px 30px at 838px 16px, rgba(60,40,20,.38), transparent),
  radial-gradient(ellipse 12px 30px at 880px 16px, rgba(60,40,20,.25), transparent),
  linear-gradient(90deg, #a5805a 0, #a17c58 50%, #8d6f4f 68%, #6d553c 85%, #5c4630 100%); position: relative; }
.orb { width: 38px; height: 38px; flex: none; border-radius: 50%; background: radial-gradient(circle at 50% 35%, #5ab8f0, #0f4f8c 70%, #0a2a50); border: 1px solid #223; display: flex; align-items: center; justify-content: center; margin-right: 13px; }
.tb-btn { height: 38px; flex: none; border: 1px solid rgba(50,30,10,.55); border-radius: 2px; background: linear-gradient(rgba(255,255,255,.32), rgba(255,255,255,.16)); display: flex; align-items: center; justify-content: center; box-shadow: inset 0 0 0 1px rgba(255,255,255,.25); }
.tb-ie { width: 51px; margin-right: 1px; }
.tb-ghost { width: 4px; height: 38px; flex: none; border: 1px solid rgba(50,30,10,.5); background: rgba(255,255,255,.18); margin-right: 7px; }
.tb-bd { width: 58px; margin-right: 4px; }
.bd-square { width: 32px; height: 32px; border-radius: 3px; background: #38a8f0; display: flex; align-items: center; justify-content: center; }
.tb-nx { width: 58px; margin-right: 4px; }
.tb-active { background: linear-gradient(rgba(255,255,255,.6), rgba(255,255,255,.35)); }
.tb-paint { width: 58px; }
.tray { margin-left: auto; display: flex; align-items: center; height: 100%; position: relative; }
.tray-ico { flex: none; display: flex; align-items: center; justify-content: center; }
.t-paw { width: 15px; height: 15px; margin-right: 7px; background: #7cc4ec; border-radius: 3px; }
.t-q { width: 14px; height: 14px; border-radius: 50%; background: #2f6fb0; font: 700 10px "Liberation Sans", sans-serif; color: #7fc0f0; margin-right: 16px; }
.t-win { width: 6px; height: 6px; border: 1px solid #bbb; margin-top: -10px; }
.t-up { border: 3px solid transparent; border-top: 3px solid #fff; border-bottom: 0; margin: 8px 10px 0 -6px; }
.t-bd { width: 15px; height: 15px; background: #2f8fe0; margin-right: 8px; }
.t-plus { width: 16px; height: 16px; border-radius: 50%; background: #e6d820; color: #0a6a10; font: 700 14px/16px "Liberation Sans", sans-serif; margin-right: 12px; }
.t-bat { width: 9px; height: 14px; border: 1px solid #fff; background: linear-gradient(transparent 50%, #fff 50%); border-radius: 1px; margin-right: 10px; }
.t-net { margin-right: 11px; flex: none; }
.t-vol { margin-right: 13px; flex: none; }
.clock { display: flex; flex-direction: column; align-items: center; font: 12.5px/17px "Open Sans", sans-serif; color: #eee; width: 68px; }
.show-desk { width: 11px; height: 30px; margin: 0 4px 0 3px; border: 1px solid rgba(255,255,255,.3); }

/* watermark */
.watermark { position: absolute; left: 1064px; top: 664px; width: 300px; height: 100px; pointer-events: none; }
.wm-hex { position: absolute; left: 0; top: 0; }
.wm-title { position: absolute; left: 96px; top: 10px; font: 700 44px/50px "Noto Sans CJK SC", sans-serif; color: #6cbde8; -webkit-text-stroke: 3px #eef3f7; paint-order: stroke fill; white-space: nowrap; }
.wm-3d { font-family: "DejaVu Serif", serif; font-weight: 700; }
.wm-url { position: absolute; left: 93px; top: 68px; font: 700 14px/16px "DejaVu Sans", sans-serif; letter-spacing: 4px; color: #6cbde8; -webkit-text-stroke: 2px #eef3f7; paint-order: stroke fill; white-space: nowrap; }
```
